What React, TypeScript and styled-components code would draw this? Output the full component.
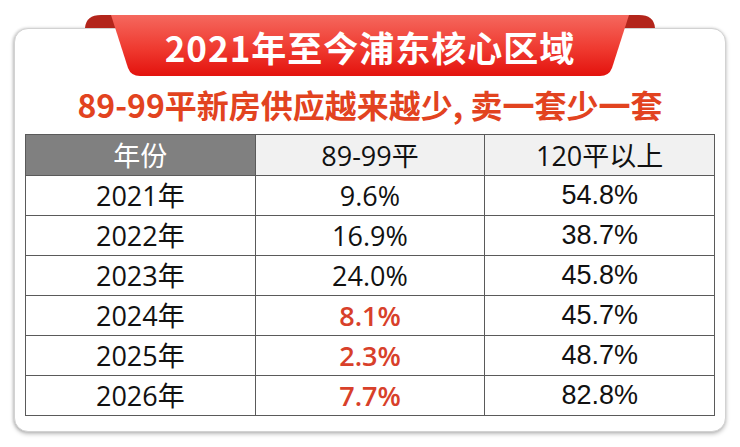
import React from 'react';
import styled, { createGlobalStyle } from 'styled-components';

const GlobalStyle = createGlobalStyle`
  html, body {
    margin: 0;
    padding: 0;
    background: #ffffff;
  }
  body {
    font-family: "Open Sans", "Noto Sans CJK SC", sans-serif;
  }
`;

const Page = styled.div`
  width: 740px;
  height: 447px;
  padding: 28px 0 0 14px;
  box-sizing: border-box;
`;

const Card = styled.div`
  width: 712px;
  height: 404px;
  box-sizing: border-box;
  padding: 0 11px;
  border: 1px solid #d2d2d2;
  border-radius: 14px;
  background: #ffffff;
  box-shadow: 0 2px 4px rgba(0, 0, 0, 0.25), -1px 0 3px rgba(0, 0, 0, 0.14);
  display: flex;
  flex-direction: column;
  align-items: center;
`;

const Ribbon = styled.div`
  position: relative;
  width: 570px;
  height: 61px;
  margin-top: -14px;
  flex-shrink: 0;
  display: flex;
  align-items: center;
  justify-content: center;
`;

const RibbonShape = styled.svg`
  position: absolute;
  inset: 0;
`;

const RibbonTitle = styled.h1`
  position: relative;
  margin: 0;
  padding-top: 2px;
  font-family: "Noto Sans CJK SC", sans-serif;
  font-weight: 700;
  font-size: 35px;
  letter-spacing: 1px;
  color: #ffffff;
  line-height: 1;
`;

const Subtitle = styled.h2`
  margin: 0;
  height: 58px;
  line-height: 56px;
  font-family: "Noto Sans CJK SC", sans-serif;
  font-weight: 700;
  font-size: 32px;
  color: #e2431f;
  white-space: nowrap;
`;

const Table = styled.table`
  width: 690px;
  border-collapse: collapse;
  table-layout: fixed;
`;

const HeadCell = styled.th<{ $dark?: boolean }>`
  height: 40px;
  padding: 0;
  border: 1px solid #5a5a5a;
  background: ${(p) => (p.$dark ? '#808080' : '#f1f1f1')};
  color: ${(p) => (p.$dark ? '#ffffff' : '#111111')};
  font-family: "Open Sans", "Noto Sans CJK SC", sans-serif;
  font-weight: 400;
  font-size: 27px;
  line-height: 1;
  text-align: center;
  vertical-align: middle;
`;

const Cell = styled.td<{ $red?: boolean; $arial?: boolean }>`
  height: 39px;
  padding: 0;
  border: 1px solid #5a5a5a;
  color: ${(p) => (p.$red ? '#d8402a' : '#111111')};
  font-family: ${(p) =>
    p.$arial ? '"Liberation Sans", Arial' : '"Open Sans"'}, "Noto Sans CJK SC", sans-serif;
  font-weight: ${(p) => (p.$red ? 600 : 400)};
  font-size: 27px;
  line-height: 1;
  text-align: center;
  vertical-align: middle;
`;

const rows = [
  { year: '2021年', mid: '9.6%', big: '54.8%', red: false },
  { year: '2022年', mid: '16.9%', big: '38.7%', red: false },
  { year: '2023年', mid: '24.0%', big: '45.8%', red: false },
  { year: '2024年', mid: '8.1%', big: '45.7%', red: true },
  { year: '2025年', mid: '2.3%', big: '48.7%', red: true },
  { year: '2026年', mid: '7.7%', big: '82.8%', red: true },
];

const RibbonBg = () => (
  <RibbonShape width="570" height="61" viewBox="0 0 570 61">
    <defs>
      <linearGradient id="rb" x1="0" y1="0" x2="0" y2="1">
        <stop offset="0" stopColor="#f5685e" />
        <stop offset="0.55" stopColor="#ef3a30" />
        <stop offset="1" stopColor="#e3120d" />
      </linearGradient>
    </defs>
    <path d="M0 13 Q1 0 16 0 L34 0 L34 13 Z" fill="#b3251b" />
    <path d="M570 13 Q569 0 554 0 L536 0 L536 13 Z" fill="#b3251b" />
    <path
      d="M26 0 L544 0 L527 53 Q524 61 515 61 L55 61 Q46 61 43 53 Z"
      fill="url(#rb)"
    />
  </RibbonShape>
);

export default function App() {
  return (
    <Page>
      <GlobalStyle />
      <Card>
        <Ribbon>
          <RibbonBg />
          <RibbonTitle>2021年至今浦东核心区域</RibbonTitle>
        </Ribbon>
        <Subtitle>89-99平新房供应越来越少, 卖一套少一套</Subtitle>
        <Table>
          <thead>
            <tr>
              <HeadCell $dark>年份</HeadCell>
              <HeadCell>89-99平</HeadCell>
              <HeadCell>120平以上</HeadCell>
            </tr>
          </thead>
          <tbody>
            {rows.map((r) => (
              <tr key={r.year}>
                <Cell>{r.year}</Cell>
                <Cell $red={r.red}>{r.mid}</Cell>
                <Cell $arial>{r.big}</Cell>
              </tr>
            ))}
          </tbody>
        </Table>
      </Card>
    </Page>
  );
}
